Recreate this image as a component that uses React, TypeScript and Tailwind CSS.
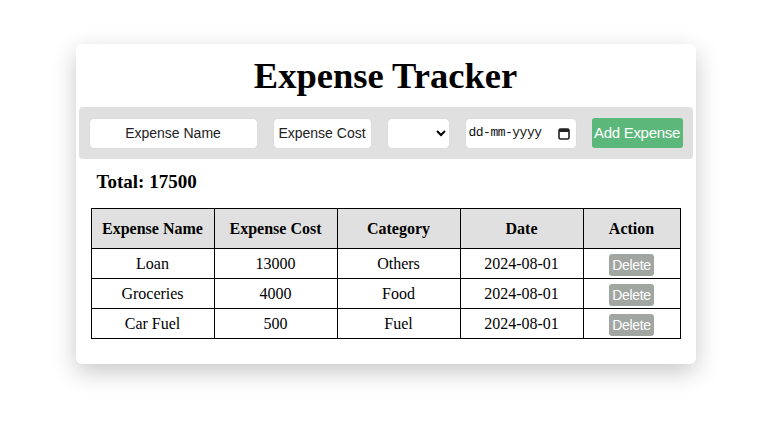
import { useState } from "react"

type Expense = { name: string; cost: number; category: string; date: string }

const initial: Expense[] = [
  { name: "Loan", cost: 13000, category: "Others", date: "2024-08-01" },
  { name: "Groceries", cost: 4000, category: "Food", date: "2024-08-01" },
  { name: "Car Fuel", cost: 500, category: "Fuel", date: "2024-08-01" },
]

function CalendarIcon() {
  return (
    <svg width="12" height="13" viewBox="0 0 12 13" fill="none">
      <rect x="1" y="2" width="10" height="10" rx="1.5" stroke="#222" strokeWidth="1.6" />
      <rect x="1" y="2" width="10" height="3" fill="#222" />
    </svg>
  )
}

export default function App() {
  const [expenses, setExpenses] = useState<Expense[]>(initial)
  const total = expenses.reduce((s, e) => s + e.cost, 0)

  const inputCls =
    "h-[31px] rounded-[5px] bg-white border border-[#dcdcdc] text-center text-[14px] text-[#111] placeholder:text-[#222] outline-none font-['Liberation_Sans',Arial,sans-serif]"

  return (
    <div className="min-h-[432px] bg-white pt-[44px] font-['Liberation_Serif','Times_New_Roman',serif]">
      <div className="mx-auto w-[620px] h-[320px] rounded-[6px] bg-white shadow-[0_8px_24px_rgba(0,0,0,0.22)] flex flex-col">
        <h1 className="pt-[12px] mb-[11px] text-center text-[36.5px] leading-[40px] font-bold text-black">
          Expense Tracker
        </h1>

        <div className="mx-[3px] h-[52px] rounded-[4px] bg-[#e0e0e0] px-[10px] flex items-center justify-between">
          <input className={`${inputCls} w-[169px]`} placeholder="Expense Name" />
          <input className={`${inputCls} w-[99px]`} placeholder="Expense Cost" />
          <select className="h-[31px] w-[63px] rounded-[5px] bg-white border border-[#dcdcdc] text-[14px] outline-none">
            <option value=""></option>
            <option>Food</option>
            <option>Fuel</option>
            <option>Others</option>
          </select>
          <div className="h-[31px] w-[112px] rounded-[5px] bg-white border border-[#dcdcdc] flex items-center justify-between pl-[3px] pr-[6px]">
            <span className="text-[13px] text-[#111] font-['Liberation_Mono','Courier_New',monospace] tracking-[-0.5px]">
              dd-mm-yyyy
            </span>
            <CalendarIcon />
          </div>
          <button className="h-[30px] w-[91px] rounded-[3px] bg-[#5cb77a] text-white text-[15px] font-['Liberation_Sans',Arial,sans-serif] tracking-[-0.3px]">
            Add Expense
          </button>
        </div>

        <h3 className="mt-[12px] ml-[21px] text-[19px] leading-[22px] font-bold text-black">
          Total: {total}
        </h3>

        <table className="mt-[15px] ml-[15px] w-[590px] border-collapse text-[16px] text-black">
          <thead>
            <tr className="h-[40px] bg-[#e0e0e0]">
              <th className="w-[123px] border border-black font-bold">Expense Name</th>
              <th className="w-[123px] border border-black font-bold">Expense Cost</th>
              <th className="w-[123px] border border-black font-bold">Category</th>
              <th className="w-[123px] border border-black font-bold">Date</th>
              <th className="border border-black font-bold">Action</th>
            </tr>
          </thead>
          <tbody>
            {expenses.map((e, i) => (
              <tr key={i} className="h-[30px]">
                <td className="border border-black text-center">{e.name}</td>
                <td className="border border-black text-center">{e.cost}</td>
                <td className="border border-black text-center">{e.category}</td>
                <td className="border border-black text-center">{e.date}</td>
                <td className="border border-black text-center">
                  <button
                    onClick={() => setExpenses(expenses.filter((_, j) => j !== i))}
                    className="h-[22px] px-[3px] rounded-[3px] bg-[#a2a6a2] text-white text-[14px] leading-[22px] font-['Liberation_Sans',Arial,sans-serif] tracking-[-0.3px] align-middle"
                  >
                    Delete
                  </button>
                </td>
              </tr>
            ))}
          </tbody>
        </table>
      </div>
    </div>
  )
}
